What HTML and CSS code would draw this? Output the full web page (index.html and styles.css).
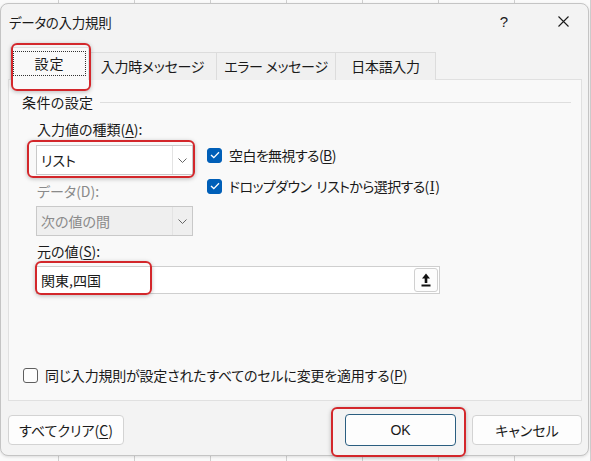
FILE: index.html
```html
<!DOCTYPE html>
<html lang="ja">
<head>
  <meta charset="utf-8">
  <link rel="stylesheet" href="styles.css">
</head>
<body>
  <div class="dialog">
    <div class="titlebar">
      <span class="title">データの入力規則</span>
      <span class="help">?</span>
      <span class="close">
        <svg width="11" height="11" viewBox="0 0 11 11"><path d="M0.5 0.5 L10.5 10.5 M10.5 0.5 L0.5 10.5" stroke="#1a1a1a" stroke-width="1.1" fill="none"/></svg>
      </span>
    </div>

    <div class="tabs">
      <div class="tab active"><span class="focus">設定</span><span class="mark mark-tab"></span></div>
      <div class="tab t2">入力時メッセージ</div>
      <div class="tab t3">エラー メッセージ</div>
      <div class="tab t4">日本語入力</div>
    </div>

    <div class="panel">
      <div class="group-head"><span>条件の設定</span><i class="rule"></i></div>

      <div class="criteria">
        <div class="fields">
          <div class="label">入力値の種類(<u>A</u>):</div>
          <div class="combo">
            <span class="combo-text">リスト</span>
            <span class="combo-btn"><svg width="9" height="5" viewBox="0 0 9 5"><path d="M0.5 0.5 L4.5 4.5 L8.5 0.5" stroke="#666" stroke-width="1" fill="none"/></svg></span>
            <span class="mark mark-combo"></span>
          </div>
          <div class="label disabled">データ(D):</div>
          <div class="combo is-disabled">
            <span class="combo-text">次の値の間</span>
            <span class="combo-btn"><svg width="9" height="5" viewBox="0 0 9 5"><path d="M0.5 0.5 L4.5 4.5 L8.5 0.5" stroke="#666" stroke-width="1" fill="none"/></svg></span>
          </div>
        </div>
        <div class="checks">
          <label class="check"><span class="box on"><svg width="10" height="8" viewBox="0 0 10 8"><path d="M1 4 L3.8 6.6 L9 1.2" stroke="#fff" stroke-width="1.3" fill="none"/></svg></span>空白を無視する(<u>B</u>)</label>
          <label class="check"><span class="box on"><svg width="10" height="8" viewBox="0 0 10 8"><path d="M1 4 L3.8 6.6 L9 1.2" stroke="#fff" stroke-width="1.3" fill="none"/></svg></span>ドロップダウン<span class="gap"></span>リストから選択する(<u class="serif">I</u>)</label>
        </div>
      </div>

      <div class="label source-label">元の値(<u>S</u>):</div>
      <div class="source">
        <span class="source-text">関東,四国</span>
        <span class="pick">
          <svg width="10" height="14" viewBox="0 0 10 14"><path d="M5 0.5 L9 5.5 L6.3 5.5 L6.3 10 L3.7 10 L3.7 5.5 L1 5.5 Z" fill="#111"/><rect x="0.5" y="11.5" width="9" height="2" fill="#111"/></svg>
        </span>
        <span class="mark mark-source"></span>
      </div>

      <label class="check apply"><span class="box"></span>同じ入力規則が設定されたすべてのセルに変更を適用する(<u>P</u>)</label>
    </div>

    <div class="footer">
      <button class="btn clear">すべてクリア(<u>C</u>)</button>
      <div class="actions">
        <button class="btn ok">OK<span class="mark mark-ok"></span></button>
        <button class="btn">キャンセル</button>
      </div>
    </div>
  </div>
</body>
</html>
```

FILE: styles.css
```css
body {
  margin: 0;
  background-color: #fafafa;
  background-image: repeating-linear-gradient(90deg, transparent 0, transparent 57px, #cfcfcf 57px, #cfcfcf 58px, transparent 58px, transparent 76px);
  background-position: 1px 0;
  font-family: "Noto Sans CJK JP", "Noto Sans", sans-serif;
  font-size: 14px;
  font-feature-settings: "palt";
  color: #1a1a1a;
  height: 461px;
  overflow: hidden;
}

u {
  text-decoration: underline;
  text-underline-offset: 2px;
}

u.serif {
  font-family: "Liberation Serif", serif;
  font-size: 15px;
  padding: 0 1px;
}

.gap {
  display: inline-block;
  width: 5px;
}

.dialog {
  box-sizing: border-box;
  width: 589px;
  height: 453px;
  margin-top: 3px;
  background: #f3f3f3;
  border: 1px solid #c4c4c4;
  border-radius: 8px;
  display: flex;
  flex-direction: column;
  box-shadow: 0 1px 3px rgba(0, 0, 0, 0.12);
}

/* title bar */
.titlebar {
  height: 39px;
  display: flex;
  align-items: center;
  padding-left: 8px;
  padding-bottom: 4px;
  box-sizing: border-box;
}

.title {
  flex: 1;
  font-size: 13.5px;
  letter-spacing: -0.3px;
}

.help {
  font-family: "Liberation Sans", sans-serif;
  font-size: 15px;
  margin-right: 50px;
}

.close {
  display: flex;
  margin-right: 19px;
}

/* tab strip */
.tabs {
  display: flex;
  align-items: flex-end;
  height: 37px;
  padding-left: 9px;
  margin-bottom: -1px;
  position: relative;
  z-index: 1;
}

.tab {
  box-sizing: border-box;
  height: 28px;
  border: 1px solid #dcdcdc;
  border-bottom: none;
  background: #f0f0f0;
  display: flex;
  align-items: center;
  justify-content: center;
  padding-bottom: 2px;
  margin-left: -1px;
  letter-spacing: -0.3px;
}

.tab.active {
  position: relative;
  width: 79px;
  height: 33px;
  background: #f9f9f9;
  border-color: #e0e0e0;
  margin-left: 0;
  padding-bottom: 2px;
}

.focus {
  box-sizing: border-box;
  width: 73px;
  height: 25px;
  border: 1px dotted #333;
  display: flex;
  align-items: center;
  justify-content: center;
  letter-spacing: 1px;
}

.t2 { width: 129px; }
.t3 { width: 120px; }
.t4 { width: 101px; }

/* red highlight frames */
.mark {
  position: absolute;
  box-sizing: border-box;
  border: 2px solid #d3272b;
  border-radius: 6px;
  box-shadow: 0 1px 4px rgba(0, 0, 0, 0.25);
  pointer-events: none;
}

.mark-tab { left: 0; top: -5px; width: 80px; height: 48px; }
.mark-combo { left: -10px; top: -6px; width: 168px; height: 38px; }
.mark-source { left: -2px; top: -6px; width: 117px; height: 34px; }
.mark-ok { left: -15px; top: -8px; width: 135px; height: 50px; }

/* settings panel */
.panel {
  box-sizing: border-box;
  height: 322px;
  margin: 0 6px 0 7px;
  background: #f9f9f9;
  border: 1px solid #e0e0e0;
  padding: 12px 10px 15px 0;
  display: flex;
  flex-direction: column;
}

.group-head {
  display: flex;
  align-items: center;
  height: 20px;
  padding-left: 13px;
  letter-spacing: 0.4px;
}

.rule {
  flex: 1;
  height: 1px;
  background: #dedede;
  margin-left: 6px;
}

.criteria {
  display: flex;
}

.fields {
  padding-left: 27px;
  width: 157px;
}

.label {
  height: 20px;
  line-height: 20px;
  padding-left: 1px;
}

.fields .label:first-child {
  margin-top: 7px;
}

.label.disabled {
  color: #8a8a8a;
  margin-top: 6px;
}

.combo {
  position: relative;
  box-sizing: border-box;
  width: 157px;
  height: 30px;
  margin-top: 6px;
  background: #fff;
  border: 1px solid #c9c9c9;
  display: flex;
  align-items: center;
}

.combo.is-disabled {
  margin-top: 5px;
  background: #efefef;
  color: #8a8a8a;
}

.combo-text {
  flex: 1;
  padding-left: 4px;
}

.combo-btn {
  width: 19px;
  height: 100%;
  border-left: 1px solid #e3e3e3;
  display: flex;
  align-items: center;
  justify-content: center;
}

.checks {
  margin-left: 14px;
  padding-top: 33px;
  display: flex;
  flex-direction: column;
  gap: 11px;
}

.check {
  display: flex;
  align-items: center;
  height: 20px;
  letter-spacing: -0.6px;
}

.box {
  box-sizing: border-box;
  width: 15px;
  height: 15px;
  border-radius: 3px;
  border: 1px solid #5f5f5f;
  background: #fdfdfd;
  margin-right: 7px;
  display: flex;
  align-items: center;
  justify-content: center;
}

.box.on {
  background: #005fb8;
  border-color: #005fb8;
}

.source-label {
  margin-top: 5px;
  margin-left: 27px;
}

.source {
  position: relative;
  box-sizing: border-box;
  width: 404px;
  height: 28px;
  margin: 5px 0 0 27px;
  background: #fff;
  border: 1px solid #cfcfcf;
  display: flex;
  align-items: center;
}

.source-text {
  flex: 1;
  padding-left: 4px;
}

.pick {
  box-sizing: border-box;
  width: 24px;
  height: 24px;
  margin-right: 1px;
  border: 1px solid #d0d0d0;
  border-radius: 3px;
  background: #fdfdfd;
  display: flex;
  align-items: center;
  justify-content: center;
}

.apply {
  margin-top: auto;
  margin-left: 14px;
  letter-spacing: -0.2px;
}

/* bottom buttons */
.footer {
  flex: 1;
  display: flex;
  align-items: center;
  justify-content: space-between;
  padding: 4px 6px 0 7px;
}

.actions {
  display: flex;
  align-items: center;
  gap: 16px;
}

.btn {
  box-sizing: border-box;
  width: 110px;
  height: 30px;
  background: #fdfdfd;
  border: 1px solid #d3d3d3;
  border-radius: 4px;
  font-family: inherit;
  font-size: 14px;
  font-feature-settings: "palt";
  color: #1a1a1a;
  padding: 0;
}

.clear {
  width: 116px;
}

.ok {
  position: relative;
  width: 111px;
  height: 32px;
  border-color: #2b5e80;
  font-family: "Liberation Sans", sans-serif;
}
```
